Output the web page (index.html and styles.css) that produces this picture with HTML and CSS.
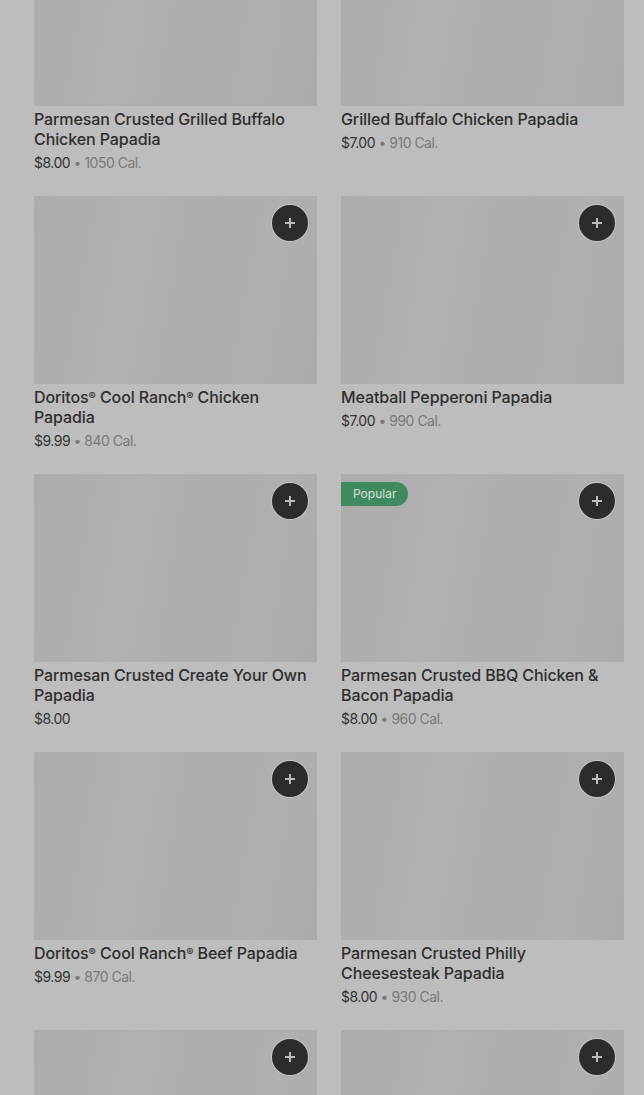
FILE: index.html
```html
<!DOCTYPE html>
<html lang="en">
<head>
  <meta charset="UTF-8">
  <meta name="viewport" content="width=device-width, initial-scale=1.0">
  <title>Papadias</title>
  <link rel="stylesheet" href="styles.css">
</head>
<body>
  <!-- Menu grid (dimmed behind an overlay) -->
  <div class="menu-grid">
    <div class="item">
      <div class="item-img"></div>
      <h3>Parmesan Crusted Grilled Buffalo Chicken Papadia</h3>
      <p class="meta">$8.00 <span class="cal">• 1050 Cal.</span></p>
    </div>
    <div class="item">
      <div class="item-img"></div>
      <h3>Grilled Buffalo Chicken Papadia</h3>
      <p class="meta">$7.00 <span class="cal">• 910 Cal.</span></p>
    </div>

    <div class="item">
      <div class="item-img"><button class="add"><svg viewBox="0 0 12 12"><path d="M6 1v10M1 6h10"/></svg></button></div>
      <h3>Doritos<span class="reg">®</span> Cool Ranch<span class="reg">®</span> Chicken Papadia</h3>
      <p class="meta">$9.99 <span class="cal">• 840 Cal.</span></p>
    </div>
    <div class="item">
      <div class="item-img"><button class="add"><svg viewBox="0 0 12 12"><path d="M6 1v10M1 6h10"/></svg></button></div>
      <h3>Meatball Pepperoni Papadia</h3>
      <p class="meta">$7.00 <span class="cal">• 990 Cal.</span></p>
    </div>

    <div class="item">
      <div class="item-img"><button class="add"><svg viewBox="0 0 12 12"><path d="M6 1v10M1 6h10"/></svg></button></div>
      <h3>Parmesan Crusted Create Your Own Papadia</h3>
      <p class="meta">$8.00</p>
    </div>
    <div class="item">
      <div class="item-img">
        <span class="badge">Popular</span>
        <button class="add"><svg viewBox="0 0 12 12"><path d="M6 1v10M1 6h10"/></svg></button>
      </div>
      <h3>Parmesan Crusted BBQ Chicken &amp; Bacon Papadia</h3>
      <p class="meta">$8.00 <span class="cal">• 960 Cal.</span></p>
    </div>

    <div class="item">
      <div class="item-img"><button class="add"><svg viewBox="0 0 12 12"><path d="M6 1v10M1 6h10"/></svg></button></div>
      <h3>Doritos<span class="reg">®</span> Cool Ranch<span class="reg">®</span> Beef Papadia</h3>
      <p class="meta">$9.99 <span class="cal">• 870 Cal.</span></p>
    </div>
    <div class="item">
      <div class="item-img"><button class="add"><svg viewBox="0 0 12 12"><path d="M6 1v10M1 6h10"/></svg></button></div>
      <h3>Parmesan Crusted Philly Cheesesteak Papadia</h3>
      <p class="meta">$8.00 <span class="cal">• 930 Cal.</span></p>
    </div>

    <div class="item">
      <div class="item-img"><button class="add"><svg viewBox="0 0 12 12"><path d="M6 1v10M1 6h10"/></svg></button></div>
    </div>
    <div class="item">
      <div class="item-img"><button class="add"><svg viewBox="0 0 12 12"><path d="M6 1v10M1 6h10"/></svg></button></div>
    </div>
  </div>
</body>
</html>
```

FILE: styles.css
```css
/* reset */
* {
  margin: 0;
  padding: 0;
  box-sizing: border-box;
}

body {
  font-family: Inter, Roboto, "Liberation Sans", sans-serif;
  background-color: #bdbdbd;
  color: #2b2b2b;
  overflow: hidden;
}

/* grid of menu items */
.menu-grid {
  display: grid;
  grid-template-columns: 283px 283px;
  column-gap: 24px;
  row-gap: 23px;
  padding: 0 20px 0 34px;
  margin-top: -82px;
}

.item-img {
  position: relative;
  height: 188px;
  background: linear-gradient(100deg, #acacac 0%, #b1b1b1 35%, #adadad 60%, #b0b0b0 80%, #aaaaaa 100%);
}

.item h3 {
  font-size: 16px;
  font-weight: 500;
  line-height: 20px;
  margin-top: 3px;
  color: #2e2e2e;
  letter-spacing: -0.1px;
}

/* small registered mark */
.reg {
  font-size: 11px;
  vertical-align: 3px;
  line-height: normal;
}

.meta {
  font-size: 14px;
  line-height: 20px;
  margin-top: 4px;
  color: #333;
  letter-spacing: -0.5px;
}

.cal {
  color: #7a7a7a;
}

/* round add button */
.add {
  position: absolute;
  top: 9px;
  right: 9px;
  width: 36px;
  height: 36px;
  border-radius: 50%;
  border: none;
  background-color: #2c2c2c;
  display: flex;
  align-items: center;
  justify-content: center;
  box-shadow: 0 0 0 1px #c4c4c4;
}

.add svg {
  width: 12px;
  height: 12px;
  fill: none;
  stroke: #bdbdbd;
  stroke-width: 2;
}

/* "Popular" tag */
.badge {
  position: absolute;
  top: 8px;
  left: 0;
  height: 24px;
  padding: 0 12px;
  border-radius: 0 12px 12px 0;
  background-color: #3f8a5e;
  color: #d6e4dc;
  font-size: 12px;
  line-height: 24px;
}
```
